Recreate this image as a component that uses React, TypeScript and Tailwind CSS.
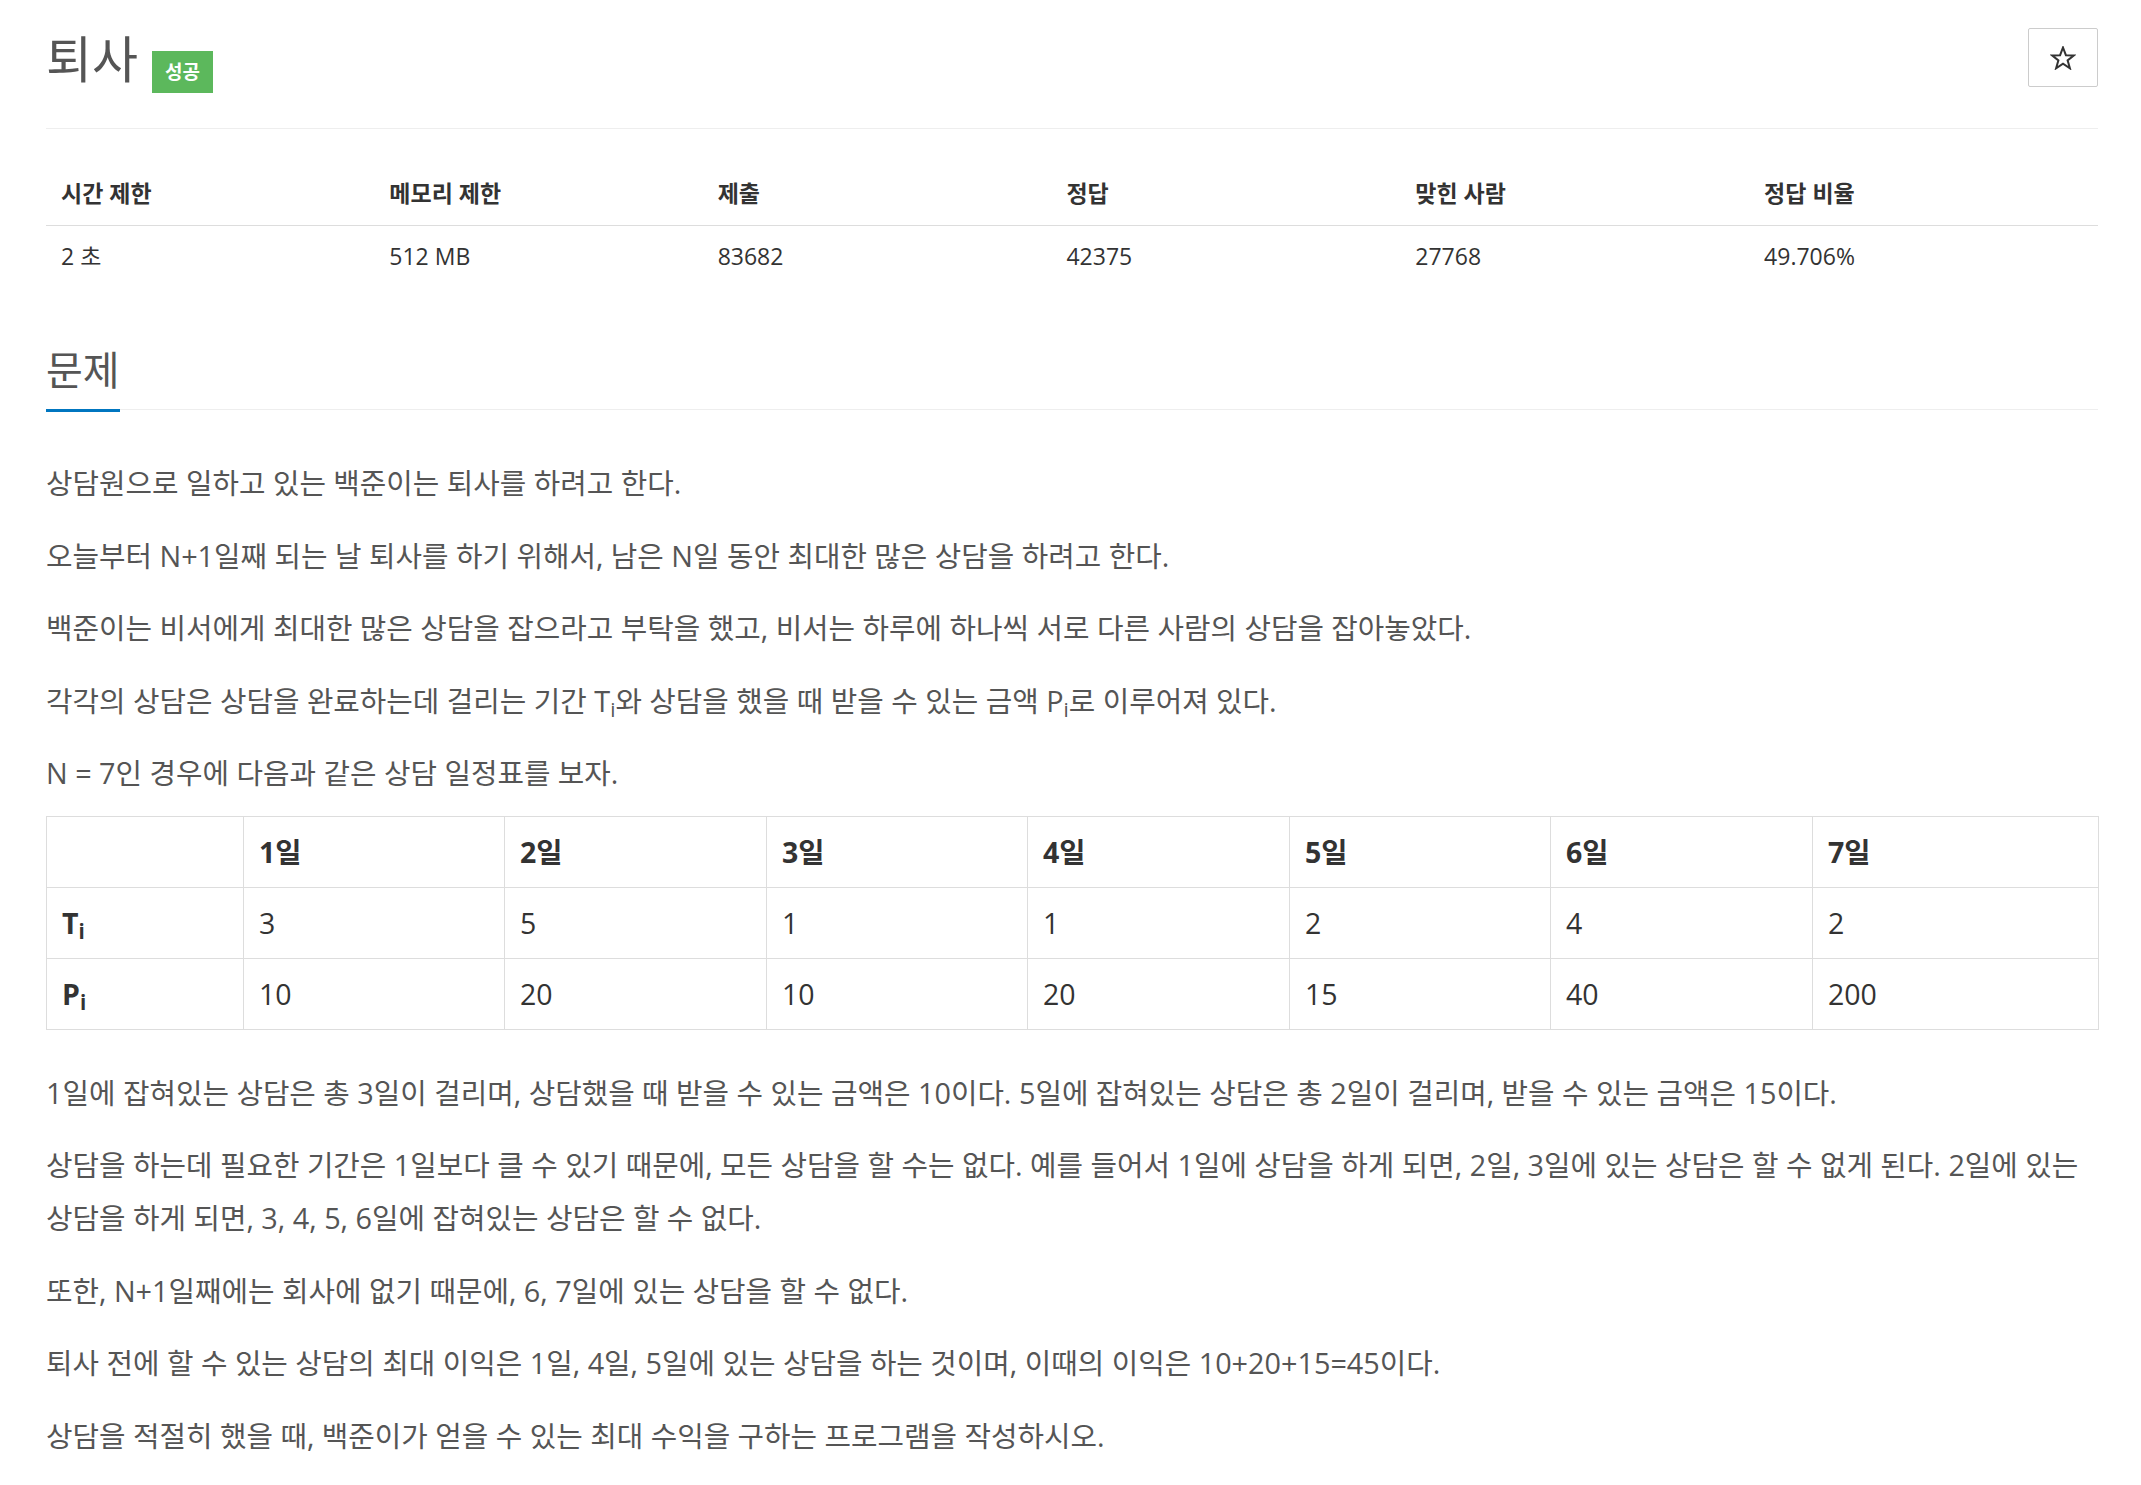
const info = {
  heads: ["시간 제한", "메모리 제한", "제출", "정답", "맞힌 사람", "정답 비율"],
  vals: ["2 초", "512 MB", "83682", "42375", "27768", "49.706%"],
  widths: ["w-[16%]", "w-[16%]", "w-[17%]", "w-[17%]", "w-[17%]", "w-[17%]"],
};

const days = ["1일", "2일", "3일", "4일", "5일", "6일", "7일"];
const t = ["3", "5", "1", "1", "2", "4", "2"];
const p = ["10", "20", "10", "20", "15", "40", "200"];

function Sub({ v }: { v: string }) {
  return (
    <span>
      {v}
      <sub className="text-[0.72em]">i</sub>
    </span>
  );
}

function StarButton() {
  return (
    <button className="flex h-[59px] w-[70px] items-center justify-center rounded-[2px] border border-[#ccc] bg-white">
      <svg width="26" height="24" viewBox="0 0 26 24">
        <polygon
          points="13,1.5 15.9,9.2 24,9.4 17.6,14.4 19.9,22.3 13,17.7 6.1,22.3 8.4,14.4 2,9.4 10.1,9.2"
          fill="none"
          stroke="#333"
          strokeWidth="2"
          strokeLinejoin="miter"
        />
      </svg>
    </button>
  );
}

export default function App() {
  return (
    <div className="min-h-screen bg-white font-['Open_Sans','Noto_Sans_CJK_KR',sans-serif] text-[#555]">
      <div className="ml-[46px] w-[2052px]">
        {/* title */}
        <div className="flex items-start justify-between border-b border-[#eee] pb-[35px] pt-[28px]">
          <div className="flex items-start">
            <h1 className="mt-[7px] text-[50px] font-normal leading-[49px] text-[#555]">퇴사</h1>
            <span className="ml-[14px] mt-[23px] flex h-[42px] w-[61px] items-center justify-center bg-[#5cb85c] text-[19px] font-bold leading-none text-white">
              성공
            </span>
          </div>
          <StarButton />
        </div>

        {/* limits */}
        <table className="mt-[32px] w-full border-collapse text-[23px] text-[#333]">
          <thead>
            <tr className="border-b border-[#ddd]">
              {info.heads.map((h, i) => (
                <th key={h} className={`${info.widths[i]} px-[15px] py-[18px] text-left font-bold leading-[28px]`}>
                  {h}
                </th>
              ))}
            </tr>
          </thead>
          <tbody>
            <tr>
              {info.vals.map((v) => (
                <td key={v} className="px-[15px] pb-[21px] pt-[16px] leading-[28px]">
                  {v}
                </td>
              ))}
            </tr>
          </tbody>
        </table>

        {/* headline */}
        <div className="mt-[55px] flex border-b border-[#eee]">
          <h2 className="-mb-[3px] border-b-[3px] border-[#0076c0] pb-[15px] text-[40px] font-normal leading-[48px] text-[#555]">
            문제
          </h2>
        </div>

        <div className="mt-[46px] break-keep text-[28.8px] leading-[53px]">
          <p className="mb-[19.5px]">상담원으로 일하고 있는 백준이는 퇴사를 하려고 한다.</p>
          <p className="mb-[19.5px]">오늘부터 N+1일째 되는 날 퇴사를 하기 위해서, 남은 N일 동안 최대한 많은 상담을 하려고 한다.</p>
          <p className="mb-[19.5px]">백준이는 비서에게 최대한 많은 상담을 잡으라고 부탁을 했고, 비서는 하루에 하나씩 서로 다른 사람의 상담을 잡아놓았다.</p>
          <p className="mb-[19.5px]">
            각각의 상담은 상담을 완료하는데 걸리는 기간 <Sub v="T" />와 상담을 했을 때 받을 수 있는 금액 <Sub v="P" />로 이루어져 있다.
          </p>
          <p className="mb-[17px]">N = 7인 경우에 다음과 같은 상담 일정표를 보자.</p>

          <table className="mb-[35.5px] w-full table-fixed border-collapse border border-[#ddd] text-[28.5px] text-[#333]">
            <colgroup>
              <col className="w-[197px]" />
              <col className="w-[261px]" />
              <col className="w-[262px]" />
              <col className="w-[261px]" />
              <col className="w-[262px]" />
              <col className="w-[261px]" />
              <col className="w-[262px]" />
              <col className="w-[286px]" />
            </colgroup>
            <thead>
              <tr>
                <th className="border border-[#ddd] px-[15px] py-[17px] leading-[36px]" />
                {days.map((d) => (
                  <th key={d} className="border border-[#ddd] px-[15px] py-[17px] text-left font-bold leading-[36px]">
                    {d}
                  </th>
                ))}
              </tr>
            </thead>
            <tbody>
              <tr>
                <th className="border border-[#ddd] px-[15px] py-[17px] text-left font-bold leading-[36px]">
                  <Sub v="T" />
                </th>
                {t.map((v, i) => (
                  <td key={i} className="border border-[#ddd] px-[15px] py-[17px] leading-[36px]">
                    {v}
                  </td>
                ))}
              </tr>
              <tr>
                <th className="border border-[#ddd] px-[15px] py-[17px] text-left font-bold leading-[36px]">
                  <Sub v="P" />
                </th>
                {p.map((v, i) => (
                  <td key={i} className="border border-[#ddd] px-[15px] py-[17px] leading-[36px]">
                    {v}
                  </td>
                ))}
              </tr>
            </tbody>
          </table>

          <p className="mb-[19.5px]">1일에 잡혀있는 상담은 총 3일이 걸리며, 상담했을 때 받을 수 있는 금액은 10이다. 5일에 잡혀있는 상담은 총 2일이 걸리며, 받을 수 있는 금액은 15이다.</p>
          <p className="mb-[19.5px]">상담을 하는데 필요한 기간은 1일보다 클 수 있기 때문에, 모든 상담을 할 수는 없다. 예를 들어서 1일에 상담을 하게 되면, 2일, 3일에 있는 상담은 할 수 없게 된다. 2일에 있는 상담을 하게 되면, 3, 4, 5, 6일에 잡혀있는 상담은 할 수 없다.</p>
          <p className="mb-[19.5px]">또한, N+1일째에는 회사에 없기 때문에, 6, 7일에 있는 상담을 할 수 없다.</p>
          <p className="mb-[19.5px]">퇴사 전에 할 수 있는 상담의 최대 이익은 1일, 4일, 5일에 있는 상담을 하는 것이며, 이때의 이익은 10+20+15=45이다.</p>
          <p className="mb-[19.5px]">상담을 적절히 했을 때, 백준이가 얻을 수 있는 최대 수익을 구하는 프로그램을 작성하시오.</p>
        </div>
      </div>
    </div>
  );
}
